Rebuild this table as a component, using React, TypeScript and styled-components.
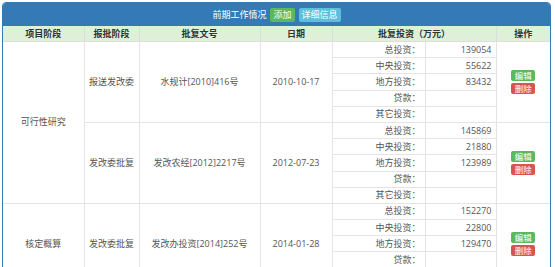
import React from "react";
import styled, { createGlobalStyle } from "styled-components";

const LABELS = ["总投资：", "中央投资：", "地方投资：", "贷款：", "其它投资："];

const STAGES = [
  {
    stage: "可行性研究",
    items: [
      {
        approve: "报送发改委",
        doc: "水规计[2010]416号",
        date: "2010-10-17",
        values: ["139054", "55622", "83432", "", ""],
      },
      {
        approve: "发改委批复",
        doc: "发改农经[2012]2217号",
        date: "2012-07-23",
        values: ["145869", "21880", "123989", "", ""],
      },
    ],
  },
  {
    stage: "核定概算",
    items: [
      {
        approve: "发改委批复",
        doc: "发改办投资[2014]252号",
        date: "2014-01-28",
        values: ["152270", "22800", "129470", "", ""],
      },
    ],
  },
];

const COLS = [81, 55, 121, 72, 93, 71, 54];

const GlobalStyle = createGlobalStyle`
  body {
    margin: 0;
    background: #fff;
    font-family: "Open Sans", "Noto Sans CJK SC", sans-serif;
  }
`;

export default function App() {
  const rows: React.ReactNode[] = [];

  STAGES.forEach((group) => {
    group.items.forEach((item, itemIdx) => {
      LABELS.forEach((label, idx) => {
        rows.push(
          <tr key={`${item.doc}-${idx}`}>
            {itemIdx === 0 && idx === 0 && (
              <Cell rowSpan={group.items.length * 5}>{group.stage}</Cell>
            )}
            {idx === 0 && (
              <>
                <Cell rowSpan={5}>{item.approve}</Cell>
                <Cell rowSpan={5}>{item.doc}</Cell>
                <Cell rowSpan={5}>{item.date}</Cell>
              </>
            )}
            <Cell align="right">{label}</Cell>
            <Cell align="right">{item.values[idx]}</Cell>
            {idx === 0 && (
              <Cell rowSpan={5}>
                <Actions>
                  <SmallButton tone="success">编辑</SmallButton>
                  <SmallButton tone="danger">删除</SmallButton>
                </Actions>
              </Cell>
            )}
          </tr>
        );
      });
    });
  });

  return (
    <>
      <GlobalStyle />
      <Panel>
        <Heading>
          <HeadingTitle>前期工作情况</HeadingTitle>
          <HeadButton tone="success">添加</HeadButton>
          <HeadButton tone="info">详细信息</HeadButton>
        </Heading>
        <Table>
          <colgroup>
            {COLS.map((w, i) => (
              <col key={i} style={{ width: w }} />
            ))}
          </colgroup>
          <thead>
            <tr>
              <HeadCell>项目阶段</HeadCell>
              <HeadCell>报批阶段</HeadCell>
              <HeadCell>批复文号</HeadCell>
              <HeadCell>日期</HeadCell>
              <HeadCell colSpan={2}>批复投资（万元）</HeadCell>
              <HeadCell>操作</HeadCell>
            </tr>
          </thead>
          <tbody>{rows}</tbody>
        </Table>
      </Panel>
    </>
  );
}

const TONES = {
  success: "#5cb85c",
  danger: "#d9534f",
  info: "#5bc0de",
};

const Panel = styled.div`
  margin: 2px 0 0 2px;
  width: 547px;
  border: 1px solid #337ab7;
  border-radius: 4px;
  overflow: hidden;
`;

const Heading = styled.div`
  height: 23px;
  background: #337ab7;
  display: flex;
  align-items: center;
  justify-content: center;
  gap: 4px;
  color: #fff;
  font-size: 9px;
`;

const HeadingTitle = styled.span``;

const HeadButton = styled.span<{ tone: keyof typeof TONES }>`
  background: ${(p) => TONES[p.tone]};
  color: #fff;
  font-size: 9px;
  line-height: 10px;
  padding: 2px 3px;
  border-radius: 2px;
`;

const Table = styled.table`
  width: 547px;
  table-layout: fixed;
  border-collapse: collapse;
  border-style: hidden;
  font-size: 9px;
  color: #555;
`;

const HeadCell = styled.th`
  height: 15px;
  padding: 0 4px;
  background: #dff0d8;
  color: #333;
  font-weight: bold;
  text-align: center;
  border: 1px solid #ddd;
  line-height: 10px;
`;

const Cell = styled.td<{ align?: "right" | "center" }>`
  height: 15.2px;
  padding: 0 4px;
  text-align: ${(p) => p.align ?? "center"};
  vertical-align: middle;
  border: 1px solid #e4e4e4;
  line-height: 10px;
  white-space: nowrap;
`;

const Actions = styled.div`
  display: flex;
  flex-direction: column;
  align-items: center;
  gap: 2px;
`;

const SmallButton = styled.span<{ tone: keyof typeof TONES }>`
  background: ${(p) => TONES[p.tone]};
  color: #fff;
  font-size: 8.5px;
  line-height: 9px;
  padding: 1px 3.5px;
  border-radius: 2px;
`;
